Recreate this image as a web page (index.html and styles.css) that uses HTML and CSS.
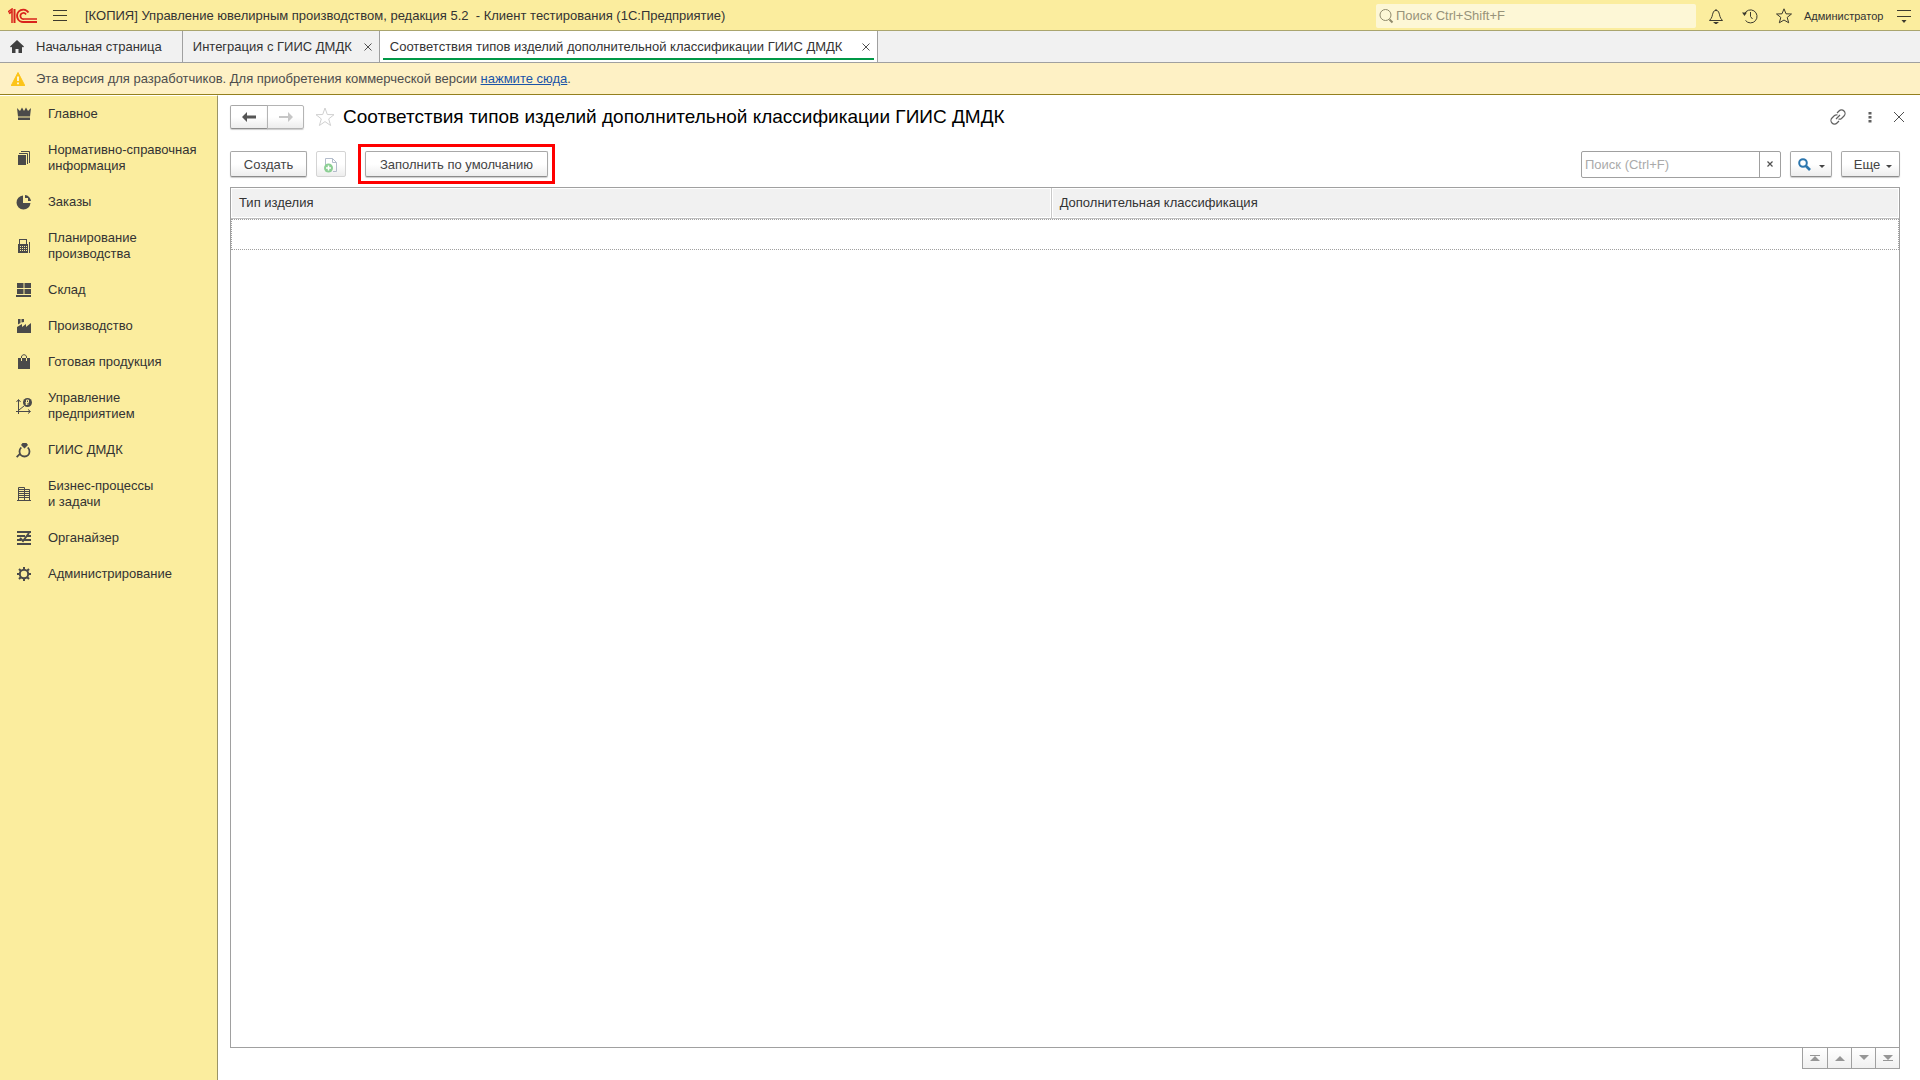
FILE: index.html
```html
<!DOCTYPE html>
<html lang="ru">
<head>
<meta charset="utf-8">
<title>Соответствия типов изделий дополнительной классификации ГИИС ДМДК</title>
<link rel="stylesheet" href="styles.css">
</head>
<body>
<header class="titlebar">
  <svg class="logo" width="30" height="16" viewBox="0 0 30 16" fill="none" stroke="#d9241c" stroke-width="2">
    <path d="M0 4l4-3v14" stroke-width="1.5"/><path d="M6.500 1v14M1 5.500l3-2" stroke-width="2"/>
    <path d="M20.500 4.500A6.200 6.200 0 1 0 16 14H29"/><path d="M18 6.500A3 3 0 1 0 16 11H29" stroke-width="1.700"/>
  </svg>
  <button class="icon-btn" aria-label="Меню"><svg width="14" height="12" viewBox="0 0 14 12" stroke="#3c3a2e"><path d="M0 .5h14M0 5.500h14M0 10.500h14"/></svg></button>
  <div class="app-title">[КОПИЯ] Управление ювелирным производством, редакция 5.2 &nbsp;- Клиент тестирования (1С:Предприятие)</div>
  <label class="global-search">
    <svg width="15" height="16" viewBox="0 0 15 16" fill="none" stroke="#8f8a6c"><circle cx="6.500" cy="7" r="5.500"/><path d="M10.500 11.500l3 3" stroke-width="2"/></svg>
    <input type="text" aria-label="Поиск" placeholder="Поиск Ctrl+Shift+F">
  </label>
  <div class="title-tools">
    <button class="icon-btn" aria-label="Уведомления"><svg width="16" height="16" viewBox="0 0 16 16" fill="none" stroke="#3c3a2e"><path d="M1.500 12.500h13c-3-3-2.500-5-3.500-7.500C10.500 3 9.500 2.500 8 2.500S5.500 3 5 5c-1 2.500-.5 4.500-3.500 7.500zM8 2.500V1"/><path d="M5 14h6L8 16.500z" fill="#3c3a2e" stroke="none"/></svg></button>
    <button class="icon-btn" aria-label="История"><svg width="16" height="16" viewBox="0 0 16 16" fill="none" stroke="#3c3a2e"><path d="M2.500 6A6.500 6.500 0 1 1 3.500 12.500M8.500 4v4.500l2 2.500"/><path d="M0 4.500h5L2.500 8z" fill="#3c3a2e" stroke="none"/></svg></button>
    <button class="icon-btn" aria-label="Избранное"><svg width="16" height="16" viewBox="0 0 16 16" fill="none" stroke="#3c3a2e"><path d="M8 .8l2 5 5.500.2-4.300 3.400 1.500 5.400L8 12l-4.700 2.800 1.500-5.400L.5 6 6 5.800z"/></svg></button>
  </div>
  <span class="user">Администратор</span>
  <button class="icon-btn" aria-label="Настройки"><svg width="14" height="14" viewBox="0 0 14 14"><path d="M0 1.500h14M0 7.500h14" stroke="#3c3a2e"/><path d="M4.500 11h5L7 14z" fill="#3c3a2e"/></svg></button>
</header>

<nav class="tabs" aria-label="Открытые окна">
  <div class="tab tab-home">
    <svg width="14" height="13" viewBox="0 0 14 13" fill="#404040"><path d="M7 0l7 6.500-1 1-1-.7V13H8.500V9h-3v4H2V6.800l-1 .7-1-1z"/></svg>
    <a href="#home">Начальная страница</a>
  </div>
  <div class="tab">
    <a href="#integration">Интеграция с ГИИС ДМДК</a>
    <button class="tab-close" aria-label="Закрыть"><svg width="8" height="8" viewBox="0 0 8 8" stroke="#505050"><path d="M.5.5l7 7M7.500.5l-7 7"/></svg></button>
  </div>
  <div class="tab tab-active">
    <a href="#types" aria-current="page">Соответствия типов изделий дополнительной классификации ГИИС ДМДК</a>
    <button class="tab-close" aria-label="Закрыть"><svg width="8" height="8" viewBox="0 0 8 8" stroke="#505050"><path d="M.5.5l7 7M7.500.5l-7 7"/></svg></button>
  </div>
</nav>

<div class="notice">
  <svg width="14" height="14" viewBox="0 0 14 14"><path d="M7 0.500L14 14H0z" fill="#fcc419" stroke="#fcc419" stroke-linejoin="round"/><path d="M7 4.500v4.500M7 10.500v1.700" stroke="#fff" stroke-width="1.600"/></svg>
  <p>Эта версия для разработчиков. Для приобретения коммерческой версии <a href="#buy">нажмите сюда</a>.</p>
</div>

<div class="workspace">
  <nav class="sidebar" aria-label="Разделы">
    <a href="#main"><svg viewBox="0 0 16 16"><path d="M1 2l3 3 2-3.500L8 5l2-3.500L12 5l3-3-1 8.500H2zM2 11.500h12v2.500H2z"/></svg><span>Главное</span></a>
    <a href="#nsi"><svg viewBox="0 0 16 16"><path d="M2 5h8v10H2z"/><path d="M3 3.500h8.500V14M5 1.500h8.500V13" fill="none" stroke="#4a4a4a"/></svg><span>Нормативно-справочная<br>информация</span></a>
    <a href="#orders"><svg viewBox="0 0 16 16"><path d="M7 1.500V9h7.500A7 7 0 1 1 7 1.500z"/><path d="M9 1a6.500 6.500 0 0 1 6 6H12V4H9z"/></svg><span>Заказы</span></a>
    <a href="#planning"><svg viewBox="0 0 16 16"><path d="M3 1h8v5h1v9H2V6h1zM4 2v4h6V2z" fill-rule="evenodd"/><path d="M13.500 4v11" stroke="#4a4a4a"/><path d="M4 8.500h7M4 10.500h7M4 12.500h7" stroke="#fbed9e" stroke-dasharray="1 1"/></svg><span>Планирование<br>производства</span></a>
    <a href="#stock"><svg viewBox="0 0 16 16"><path d="M1 1h6.500v5H1zM8.500 1H15v5H8.500zM1 7h6.500v5H1zM8.500 7H15v5H8.500zM0 13h15v2H0z"/></svg><span>Склад</span></a>
    <a href="#production"><svg viewBox="0 0 16 16"><path d="M1 9l5-3v3l4-3v3l5-4v10H1zM2 1h2.500v4L2 6.500zM5.500 1H8v3L5.500 4.500z"/></svg><span>Производство</span></a>
    <a href="#goods"><svg viewBox="0 0 16 16"><path d="M2 4h12v11H2z"/><path d="M5.500 4V3c0-3 5-3 5 0v1" fill="none" stroke="#4a4a4a"/><path d="M5.500 4v3M10.500 4v3" stroke="#fbed9e"/></svg><span>Готовая продукция</span></a>
    <a href="#enterprise"><svg viewBox="0 0 16 16"><path d="M2.500 16V2M0 13.500h14M.5 4l2-2.500 2 2.500M12 11.500l2.500 2-2.500 2M3 12l5-4" fill="none" stroke="#4a4a4a"/><path d="M11.500 0a4.500 4.500 0 1 1 0 9 4.500 4.500 0 0 1 0-9z"/><path d="M10.500 7V2h2v2.500h-3M9.500 6h3" fill="none" stroke="#fbed9e"/></svg><span>Управление<br>предприятием</span></a>
    <a href="#giis"><svg viewBox="0 0 16 16"><circle cx="8.500" cy="9.500" r="5" fill="none" stroke="#4a4a4a" stroke-width="1.800"/><path d="M3 3h11l-5.500 6z" fill="#fbed9e"/><path d="M6.500 1h4l1.500 2-3.500 3.500L5 3zM0 14.500l3.500-3.500 1.300 1.300-3.500 3.500z"/></svg><span>ГИИС ДМДК</span></a>
    <a href="#business"><svg viewBox="0 0 16 16"><path d="M1 14.500h14M2.500 14V1.500h6V14M8.500 3.500h5V14M3 3.500h5M3 5.500h5M3 7.500h5M3 9.500h5M3 11.500h5M9 5.500h4M9 7.500h4M9 9.500h4M9 11.500h4" fill="none" stroke="#4a4a4a"/></svg><span>Бизнес-процессы<br>и задачи</span></a>
    <a href="#organizer"><svg viewBox="0 0 16 16"><path d="M1 2h14M1 6h8M11 6h4M1 10h4M8 10h7M1 14h14" stroke="#4a4a4a" stroke-width="2"/><path d="M4 8l3 3 6-8" fill="none" stroke="#4a4a4a" stroke-width="2"/></svg><span>Органайзер</span></a>
    <a href="#admin"><svg viewBox="0 0 16 16" fill="none"><circle cx="8" cy="8" r="4.200" fill="none" stroke="#4a4a4a" stroke-width="2"/><path d="M8 1v3M8 12v3M1 8h3M12 8h3M3 3l2 2M11 11l2 2M13 3l-2 2M5 11l-2 2" stroke="#4a4a4a" stroke-width="2"/></svg><span>Администрирование</span></a>
  </nav>

  <main class="form">
    <div class="form-head">
      <div class="history">
        <button class="btn" aria-label="Назад"><svg width="14" height="10" viewBox="0 0 14 10"><path d="M5 0v3.500h9v3H5V10L0 5z" fill="#555"/></svg></button>
        <button class="btn" aria-label="Вперед" disabled><svg width="14" height="10" viewBox="0 0 14 10"><path d="M9 0v4H0v2h9v4l5-5z" fill="#c6c6c6"/></svg></button>
      </div>
      <button class="icon-btn" aria-label="В избранное"><svg width="20" height="20" viewBox="0 0 20 20" fill="none" stroke="#d0d0d0"><path d="M10 1l2.300 6.500 6.700.2-5.300 4.200 1.900 6.600L10 14.600l-5.600 3.900 1.900-6.600L1 7.700l6.700-.2z"/></svg></button>
      <h1>Соответствия типов изделий дополнительной классификации ГИИС ДМДК</h1>
      <div class="form-tools">
        <button class="icon-btn" aria-label="Получить ссылку"><svg width="16" height="16" viewBox="0 0 16 16" fill="none" stroke="#606060" stroke-width="1.200"><path d="M7 4l2-2a3.300 3.300 0 0 1 5 5l-2.500 2.500a3 3 0 0 1-3 .5M9 12l-2 2a3.300 3.300 0 0 1-5-5l2.500-2.500a3 3 0 0 1 3-.5M6 10l4-4"/></svg></button>
        <button class="icon-btn" aria-label="Дополнительно"><svg width="4" height="12" viewBox="0 0 4 12" fill="#606060"><path d="M.5 1h3v2.500h-3zM.5 5h3v2.500h-3zM.5 9h3v2.500h-3z"/></svg></button>
        <button class="icon-btn" aria-label="Закрыть"><svg width="10" height="10" viewBox="0 0 10 10" stroke="#505050"><path d="M0 0l10 10M10 0L0 10"/></svg></button>
      </div>
    </div>

    <div class="commands">
      <button class="btn btn-create">Создать</button>
      <button class="btn btn-copy" aria-label="Скопировать" disabled><svg width="14" height="16" viewBox="0 0 14 16" fill="none"><path d="M1.500 8V1.500h7l4 4v9H9M8.500 1.500v4h4" stroke="#b3bccb"/><circle cx="4.500" cy="11" r="4.500" fill="#8ccf94"/><path d="M4.500 8.500v5M2 11h5" stroke="#fff" stroke-width="1.500"/></svg></button>
      <button class="btn btn-fill">Заполнить по умолчанию</button>
      <div class="search">
        <input type="text" aria-label="Поиск по списку" placeholder="Поиск (Ctrl+F)">
        <button aria-label="Очистить"><svg width="6" height="6" viewBox="0 0 6 6" stroke="#505050" stroke-width="1.200"><path d="M.5.5l5 5M5.500.5l-5 5"/></svg></button>
      </div>
      <button class="btn btn-find" aria-label="Найти"><svg width="13" height="13" viewBox="0 0 13 13" fill="none" stroke="#2c76ae" stroke-width="2"><circle cx="5" cy="5" r="3.800"/><path d="M8 8l4 4" stroke-width="2.600"/></svg><i class="caret"></i></button>
      <button class="btn btn-more">Еще<i class="caret"></i></button>
    </div>

    <div class="list">
      <table>
        <thead><tr><th scope="col" class="col-type">Тип изделия</th><th scope="col">Дополнительная классификация</th></tr></thead>
        <tbody><tr><td></td><td></td></tr></tbody>
      </table>
    </div>
    <div class="pager">
      <button aria-label="В начало"><svg width="10" height="6" viewBox="0 0 10 6"><path d="M0 0h10v1H0zM5 1l5 5H0z"/></svg></button>
      <button aria-label="Вверх"><svg width="10" height="6" viewBox="0 0 10 6"><path d="M5 1l5 5H0z"/></svg></button>
      <button aria-label="Вниз"><svg width="10" height="6" viewBox="0 0 10 6"><path d="M0 0h10L5 5z"/></svg></button>
      <button aria-label="В конец"><svg width="10" height="6" viewBox="0 0 10 6"><path d="M0 0h10L5 5zM0 5h10v1H0z"/></svg></button>
    </div>
  </main>
</div>
</body>
</html>
```
FILE: styles.css
```css
* { box-sizing: border-box; }
body {
  margin: 0;
  min-height: 100vh;
  display: flex;
  flex-direction: column;
  background: #fff;
  color: #333;
  font: 13px/16px "Liberation Sans", Arial, sans-serif;
}
svg { display: block; flex: none; }
button, input { font: inherit; color: inherit; padding: 0; margin: 0; }
p, h1 { margin: 0; }
.icon-btn { display: flex; border: 0; background: none; }

/* title bar */
.titlebar {
  display: flex;
  align-items: center;
  height: 31px;
  padding: 1px 9px 0 8px;
  background: #fbed9e;
  border-bottom: 1px solid #aaa56e;
}
.logo { margin-right: 15px; }
.app-title { margin-left: 18px; white-space: nowrap; }
.global-search {
  display: flex;
  align-items: center;
  width: 320px;
  height: 24px;
  margin-left: auto;
  padding-left: 3px;
  gap: 2px;
  background: #fdf7d6;
  border-radius: 2px;
}
.global-search input { flex: 1; min-width: 0; border: 0; background: none; outline: 0; }
.global-search input::placeholder { color: #98937a; opacity: 1; }
.title-tools { display: flex; gap: 18px; margin: 0 12px; }
.user { width: 80px; font-size: 11px; margin-right: 13px; white-space: nowrap; }

/* window tabs */
.tabs {
  display: flex;
  height: 32px;
  background: #f1f1f1;
  border-bottom: 1px solid #a0a0a0;
}
.tab {
  position: relative;
  display: flex;
  align-items: center;
  gap: 12px;
  padding: 0 7px 0 10px;
  border-right: 1px solid #a0a0a0;
  white-space: nowrap;
}
.tab a { color: inherit; text-decoration: none; }
.tab-home { padding-right: 20px; }
.tab-active { gap: 20px; background: #fff; }
.tab-active::after {
  content: "";
  position: absolute;
  left: 3px;
  right: 3px;
  bottom: 2px;
  height: 2px;
  background: #009846;
}
.tab-close { display: flex; border: 0; background: none; }

/* version notice */
.notice {
  display: flex;
  align-items: center;
  gap: 11px;
  height: 32px;
  padding-left: 11px;
  background: #fef1c5;
  border-bottom: 1px solid #94801e;
  color: #4d4d4d;
}
.notice a { color: #1a54a8; }

.workspace { flex: 1; display: flex; }

/* sections */
.sidebar {
  width: 218px;
  flex: none;
  background: #fbed9e;
  border-right: 1px solid #9b9466;
  border-top: 1px solid #fff;
}
.sidebar a {
  display: flex;
  align-items: center;
  gap: 16px;
  padding: 10px 0 10px 16px;
  color: inherit;
  text-decoration: none;
}
.sidebar svg { width: 16px; height: 16px; fill: #4a4a4a; }

/* form */
.form {
  flex: 1;
  min-width: 0;
  display: flex;
  flex-direction: column;
  padding: 10px 20px 11px 12px;
}
.form-head { display: flex; align-items: center; height: 24px; }
.btn {
  display: flex;
  align-items: center;
  justify-content: center;
  height: 26px;
  border: 1px solid #a8a8a8;
  border-bottom-color: #8c8c8c;
  border-radius: 2px;
  background: linear-gradient(#fff 50%, #ededed);
  box-shadow: 0 1px 1px #ccc;
  color: #444;
  white-space: nowrap;
}
.history { display: flex; margin-right: 11px; }
.history .btn { width: 38px; height: 24px; border-radius: 2px 0 0 2px; }
.history .btn + .btn { width: 37px; margin-left: -1px; border-color: #b4b4b4; border-radius: 0 2px 2px 0; }
h1 { margin-left: 8px; font-size: 19px; line-height: 24px; font-weight: 400; color: #000; white-space: nowrap; }
.form-tools { display: flex; align-items: center; gap: 22px; margin: 0 -4px 0 auto; }

.commands { display: flex; align-items: center; height: 26px; margin: 22px 0 10px; }
.commands .btn { padding-top: 1px; }
.btn-create { width: 77px; margin-right: 9px; }
.btn-copy { width: 30px; margin-right: 19px; border-color: #d4d4d4; box-shadow: none; }
.btn-fill { position: relative; width: 183px; }
.btn-fill::after {
  content: "";
  position: absolute;
  inset: -8px;
  border: 3px solid #f00;
  pointer-events: none;
}
.search {
  display: flex;
  width: 200px;
  height: 27px;
  margin: 0 9px 0 auto;
  border: 1px solid #a0a0a0;
  border-radius: 2px;
}
.search input { flex: 1; min-width: 0; padding: 1px 0 0 3px; border: 0; outline: 0; background: none; }
.search input::placeholder { color: #aaa; opacity: 1; }
.search button {
  display: flex;
  align-items: center;
  justify-content: center;
  width: 21px;
  border: 0;
  border-left: 1px solid #a0a0a0;
  background: none;
}
.btn-find { width: 42px; margin-right: 9px; gap: 8px; }
.commands .btn-more { width: 59px; gap: 6px; padding-left: 5px; }
.caret { margin-top: 3px; border: 3px solid transparent; border-top-color: #444; border-bottom: 0; }

/* list */
.list { flex: 1; border: 1px solid #a0a0a0; }
table { width: 100%; table-layout: fixed; border-collapse: separate; border-spacing: 0; }
th {
  height: 31px;
  padding: 0 8px;
  background: #f1f1f1;
  border-bottom: 1px solid #c0c0c0;
  box-shadow: inset 0 0 0 1px #fff;
  font-weight: 400;
  text-align: left;
}
.col-type { width: 49.2%; border-right: 1px solid #c8c8c8; }
td { height: 31px; padding: 0; }
tbody tr { outline: 1px dotted #a0a0a0; outline-offset: -1px; }

.pager { display: flex; align-self: flex-end; margin-top: -1px; border: 1px solid #a0a0a0; }
.pager button {
  display: flex;
  align-items: center;
  justify-content: center;
  width: 24px;
  height: 20px;
  border: 0;
  background: linear-gradient(#fff, #f0f0f0);
}
.pager button + button { border-left: 1px solid #a0a0a0; }
.pager svg { fill: #969696; }
```
